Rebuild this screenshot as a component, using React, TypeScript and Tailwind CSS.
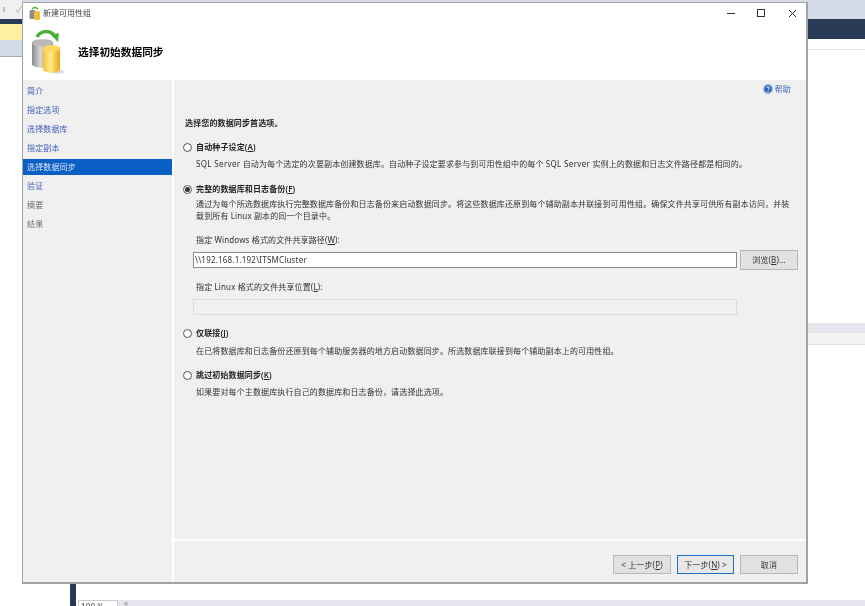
import { ReactNode } from "react";

const steps = [
  { label: "简介", kind: "link" },
  { label: "指定选项", kind: "link" },
  { label: "选择数据库", kind: "link" },
  { label: "指定副本", kind: "link" },
  { label: "选择数据同步", kind: "active" },
  { label: "验证", kind: "link" },
  { label: "摘要", kind: "muted" },
  { label: "结果", kind: "muted" },
];

function Radio({ checked = false }: { checked?: boolean }) {
  return (
    <span className="flex h-[9px] w-[9px] shrink-0 items-center justify-center rounded-full border border-[#555] bg-white">
      {checked && <span className="h-[5px] w-[5px] rounded-full bg-[#333]" />}
    </span>
  );
}

function Option({ label, checked, className }: { label: ReactNode; checked?: boolean; className: string }) {
  return (
    <div className={`flex h-[12px] items-center gap-[4px] ${className}`}>
      <Radio checked={checked} />
      <span className="font-semibold text-[#222]">{label}</span>
    </div>
  );
}

function Btn({ children, className = "", primary = false }: { children: ReactNode; className?: string; primary?: boolean }) {
  return (
    <button
      type="button"
      className={`flex h-[19px] items-center justify-center border text-[#333] ${
        primary ? "border-[#1a73c9] bg-[#e8e8e8]" : "border-[#b8b8b8] bg-[#e1e1e1]"
      } ${className}`}
    >
      {children}
    </button>
  );
}

function DbIcon() {
  return (
    <svg width="36" height="46" viewBox="0 0 36 46" className="shrink-0">
      <defs>
        <linearGradient id="gray" x1="0" x2="1" y1="0" y2="0">
          <stop offset="0" stopColor="#8a8a8a" />
          <stop offset="0.4" stopColor="#d8d8d8" />
          <stop offset="1" stopColor="#777" />
        </linearGradient>
        <linearGradient id="gold" x1="0" x2="1" y1="0" y2="0">
          <stop offset="0" stopColor="#f4c53a" />
          <stop offset="0.45" stopColor="#ffe88a" />
          <stop offset="1" stopColor="#e9a914" />
        </linearGradient>
      </defs>
      <path d="M11 40h20l1 3-8 1z" fill="#ddd" />
      <path d="M0 13c0-5 21-5 21 0v21c0 5-21 5-21 0z" fill="url(#gray)" />
      <ellipse cx="10.5" cy="13" rx="10.5" ry="3.6" fill="#b9b9b9" />
      <path d="M11 19c0-5 17-5 17 0v20c0 5-17 5-17 0z" fill="url(#gold)" />
      <ellipse cx="19.5" cy="18.5" rx="8.5" ry="3.2" fill="#ffd75e" />
      <path d="M5 7C9 0 18 0 23 6" fill="none" stroke="#4cae34" strokeWidth="3.5" />
      <path d="M19 5l8-2-1 9z" fill="#4cae34" />
    </svg>
  );
}

function TitleIcon() {
  return (
    <svg width="12" height="14" viewBox="0 0 12 14" className="shrink-0">
      <path d="M3 3c2-2 4-2 6 0" fill="none" stroke="#4cae34" strokeWidth="1.5" />
      <rect x="0.5" y="4" width="6" height="9" rx="1.5" fill="#8f8f8f" />
      <rect x="5" y="5" width="6" height="9" rx="1.5" fill="#f2bf3a" />
    </svg>
  );
}

function HelpIcon() {
  return (
    <svg width="10" height="10" viewBox="0 0 10 10" className="shrink-0">
      <circle cx="5" cy="5" r="5" fill="#8fb2e0" />
      <circle cx="5" cy="5" r="3.5" fill="#2a62b8" />
      <path d="M3.6 4c.2-1.4 2.8-1.4 2.8 0 0 1-1.4 1-1.4 2" fill="none" stroke="#fff" strokeWidth="0.9" />
      <circle cx="5" cy="7.4" r="0.55" fill="#fff" />
    </svg>
  );
}

export default function App() {
  return (
    <div className="relative flex h-[606px] w-[865px] overflow-hidden bg-white font-['Noto_Sans','Noto_Sans_CJK_SC',sans-serif] text-[8px] leading-[12px] tracking-[0.13px] text-[#333] blur-[0.3px]">
      {/* IDE behind the dialog */}
      <div className="flex w-[22px] shrink-0 flex-col">
        <div className="flex h-[19px] items-center gap-[11px] bg-[#f0f0f0] pl-[3px] text-[#aaa]">
          <span className="h-[5px] w-[5px] bg-[#bbb]" />
          <span className="text-[9px]">✓</span>
        </div>
        <div className="h-[5px] bg-[#293a56]" />
        <div className="h-[16px] bg-[#fdf0a2]" />
        <div className="h-[17px] border-b border-[#aaa] bg-[#d6dbe9]" />
      </div>
      <div className="flex min-w-0 flex-1 flex-col">
        <div className="h-[19px] bg-[#d6dbe9]" />
        <div className="h-[20px] bg-[#293a56]" />
        <div className="h-[11px] border-b border-[#e6e7ee]" />
        <div className="h-[273px]" />
        <div className="h-[10px] bg-[#e6e7ee]" />
        <div className="h-[12px] border-b border-[#ddd] bg-[#f3f3f3]" />
        <div className="flex-1" />
        <div className="flex h-[23px] shrink-0 pl-[48px]">
          <div className="w-[6px] bg-[#293a56]" />
          <div className="flex min-h-0 flex-1 flex-col pl-[2px]">
            <div className="h-[17px] shrink-0" />
            <div className="flex h-[6px] shrink-0">
              <div className="h-[12px] w-[40px] border border-[#ccc] bg-white pl-[2px] text-[#444]">100 %</div>
              <div className="flex-1 bg-[#e6e7ee] pl-[5px] text-[5px] leading-[6px] text-[#aaa]">◀</div>
            </div>
          </div>
        </div>
      </div>

      {/* dialog */}
      <div className="absolute left-[22px] top-[2px] flex h-[582px] w-[786px] flex-col border border-b-2 border-r-2 border-[#a3a3a3] bg-[#f0f0f0]">
        <div className="flex h-[77px] flex-col bg-white">
          <div className="flex h-[20px] shrink-0 items-center pl-[6px]">
            <TitleIcon />
            <span className="ml-[2px] tracking-normal text-[#444]">新建可用性组</span>
            <div className="ml-auto flex h-full items-center">
              <svg width="8" height="8" viewBox="0 0 8 8" className="mr-[22px]">
                <path d="M0 4.5h8" stroke="#333" strokeWidth="1" />
              </svg>
              <svg width="8" height="8" viewBox="0 0 8 8" className="mr-[23px]">
                <rect x="0.5" y="0.5" width="7" height="7" fill="none" stroke="#333" strokeWidth="1" />
              </svg>
              <svg width="9" height="9" viewBox="0 0 9 9" className="mr-[9px]">
                <path d="M1 1l7 7M8 1l-7 7" stroke="#333" strokeWidth="1" />
              </svg>
            </div>
          </div>
          <div className="flex items-start pl-[9px]">
            <div className="mt-[7px]">
              <DbIcon />
            </div>
            <h1 className="ml-[10px] mt-[22px] text-[10.7px] font-bold leading-[14px] tracking-normal text-black">选择初始数据同步</h1>
          </div>
        </div>
        <div className="flex min-h-0 flex-1">
          <nav className="flex w-[149px] shrink-0 flex-col gap-[3px] pt-[3px]">
            {steps.map((s) => (
              <div
                key={s.label}
                className={`flex h-[16px] items-center pl-[4px] ${
                  s.kind === "active"
                    ? "bg-[#0a5fc4] text-[#dbe8f8]"
                    : s.kind === "link"
                      ? "text-[#3c60b8]"
                      : "text-[#6d6d6d]"
                }`}
              >
                {s.label}
              </div>
            ))}
          </nav>
          <div className="flex min-w-0 flex-1 flex-col border-l-2 border-white">
            <div className="flex-1 pl-[9px] pr-[8px] pt-[3px]">
              <div className="flex h-[12px] items-center justify-end gap-[2px] pr-[7px] text-[#3c60b8]">
                <HelpIcon />
                <span>帮助</span>
              </div>
              <p className="ml-[2px] mt-[22px] h-[12px] font-semibold text-[#222]">选择您的数据同步首选项。</p>
              <Option className="mt-[12px]" label={<>自动种子设定(<u>A</u>)</>} />
              <p className="ml-[13px] mt-[5px] h-[12px] whitespace-nowrap">
                <span className="tracking-[0.35px]">SQL Server</span> 自动为每个选定的次要副本创建数据库。自动种子设定要求参与到可用性组中的每个 <span className="tracking-[0.35px]">SQL Server</span> 实例上的数据和日志文件路径都是相同的。
              </p>
              <Option className="mt-[13px]" checked label={<>完整的数据库和日志备份(<u>F</u>)</>} />
              <div className="ml-[13px] mt-[3px]">
                <p className="whitespace-nowrap">通过为每个所选数据库执行完整数据库备份和日志备份来启动数据同步。将这些数据库还原到每个辅助副本并联接到可用性组。确保文件共享可供所有副本访问，并装</p>
                <p>载到所有 Linux 副本的同一个目录中。</p>
              </div>
              <div className="ml-[10px]">
                <p className="ml-[3px] mt-[12px]">指定 Windows 格式的文件共享路径(<u>W</u>):</p>
                <div className="mt-[4px] flex h-[20px] items-center">
                  <div className="flex h-[16px] w-[544px] items-center border border-[#8a8a8a] bg-white pl-[1px] tracking-[0.2px] text-[#333]">
                    \\192.168.1.192\ITSMCluster
                  </div>
                  <Btn className="ml-[3px] h-[20px] w-[58px]">浏览(<u>B</u>)...</Btn>
                </div>
                <p className="ml-[3px] mt-[11px]">指定 Linux 格式的文件共享位置(<u>L</u>):</p>
                <div className="mt-[6px] h-[16px] w-[544px] border border-[#dcdcdc] bg-[#f0f0f0]" />
              </div>
              <Option className="mt-[12px]" label={<>仅联接(<u>J</u>)</>} />
              <p className="ml-[13px] mt-[6px] h-[12px]">在已将数据库和日志备份还原到每个辅助服务器的地方启动数据同步。所选数据库联接到每个辅助副本上的可用性组。</p>
              <Option className="mt-[12px]" label={<>跳过初始数据同步(<u>K</u>)</>} />
              <p className="ml-[13px] mt-[5px] h-[12px]">如果要对每个主数据库执行自己的数据库和日志备份，请选择此选项。</p>
            </div>
            <div className="flex h-[43px] justify-end gap-[6px] border-t-2 border-white pr-[8px] pt-[14px]">
              <Btn className="w-[58px]">&lt; 上一步(<u>P</u>)</Btn>
              <Btn primary className="w-[57px]">下一步(<u>N</u>) &gt;</Btn>
              <Btn className="w-[58px]">取消</Btn>
            </div>
          </div>
        </div>
      </div>
    </div>
  );
}
